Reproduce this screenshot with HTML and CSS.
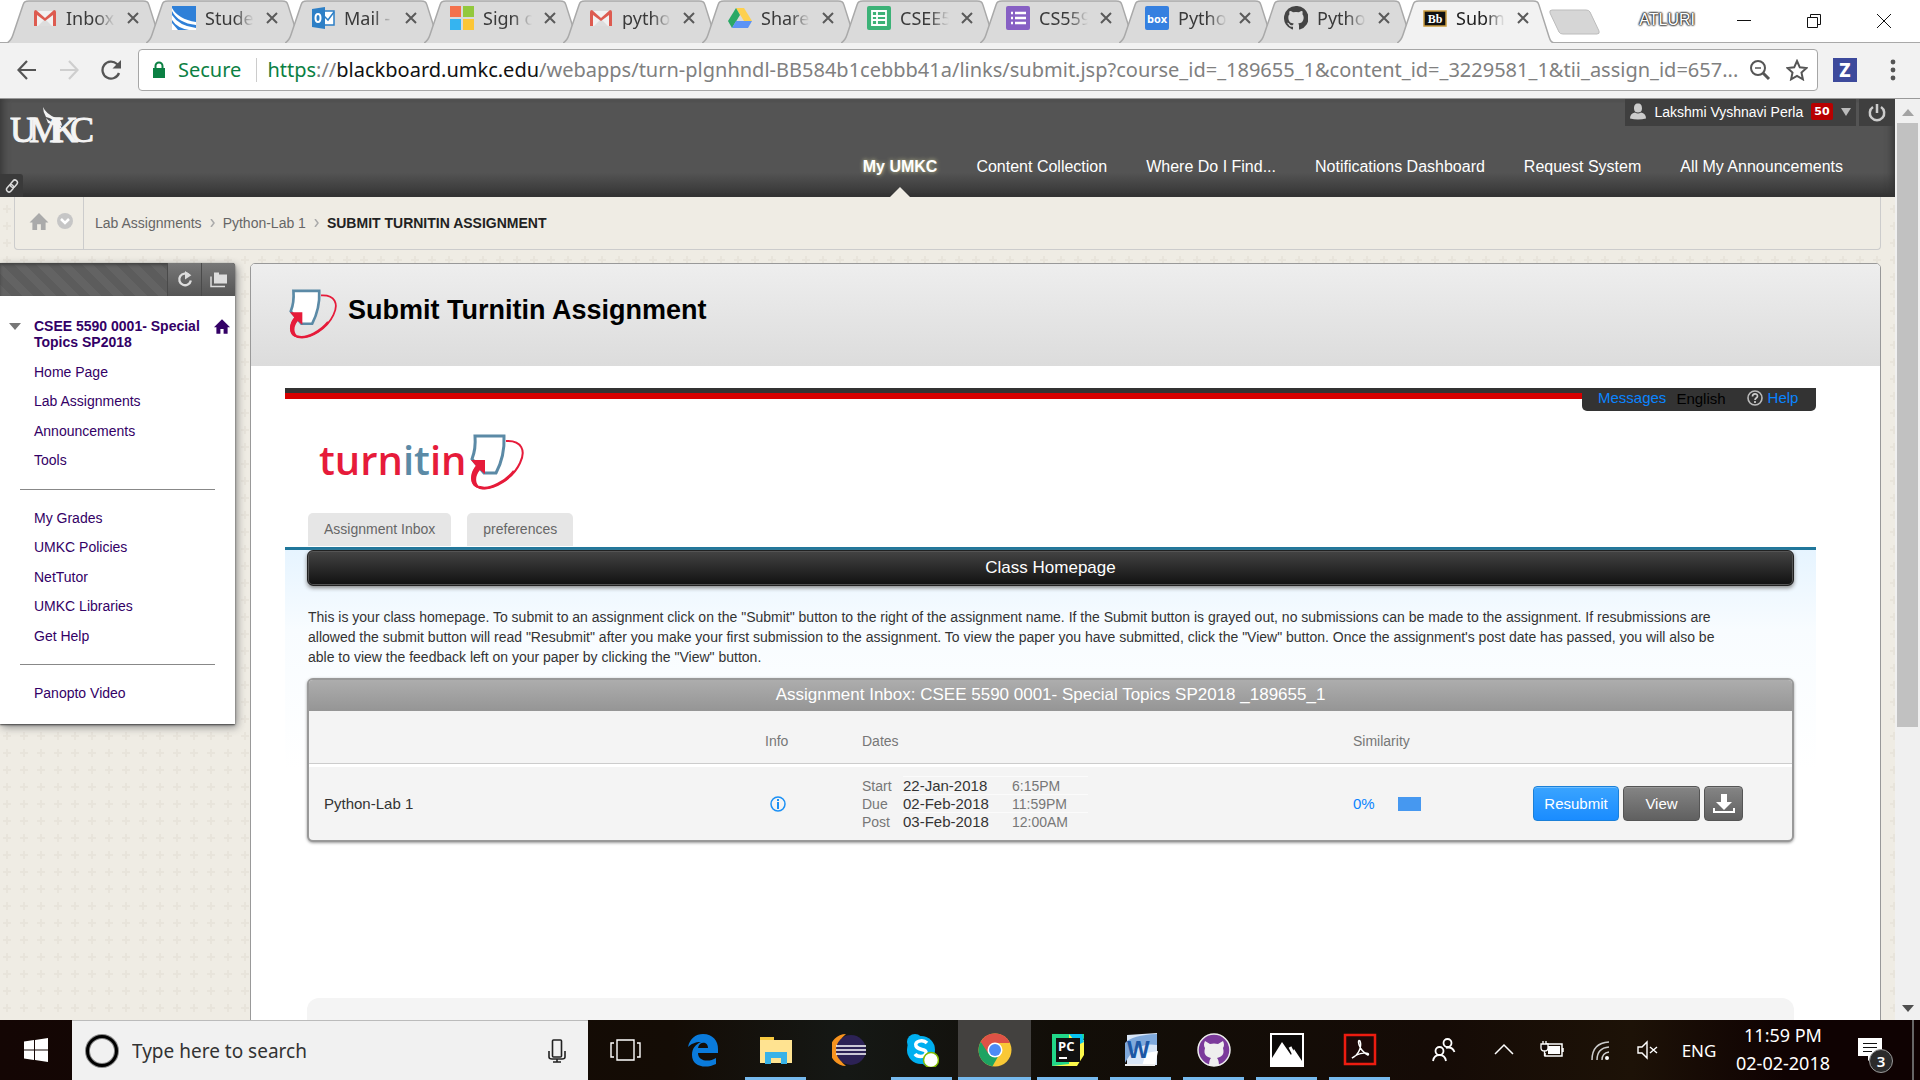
FILE: index.html
```html
<!DOCTYPE html>
<html lang="en">
<head>
<meta charset="utf-8">
<title>Submit Turnitin Assignment</title>
<link rel="stylesheet" href="styles.css">
</head>
<body>
<svg class="defs" aria-hidden="true">
  <symbol id="shape" viewBox="0 0 158 42" preserveAspectRatio="none"><path d="M0 42C4 40 5 37 6 34L16 5C17 2 18 1 22 1H136C140 1 141 2 142 5L152 36C153 39 154 42 158 42" stroke="#a9a9a9" stroke-width="1.5"/></symbol>
  <symbol id="x" viewBox="0 0 12 12"><path d="M1 1L11 11M11 1L1 11" stroke="#5a5a5a" stroke-width="2"/></symbol>
  <symbol id="gmail" viewBox="0 0 24 24"><path d="M2 5h20v15H2z" fill="#f1f1f1"/><path d="M5 20l7-7 7 7z" fill="#ddd"/><path d="M1 6q0-2 2-2l9 8 9-8q2 0 2 2v14h-3V9l-8 6-8-6v11H1z" fill="#dd5b50"/></symbol>
  <symbol id="cat" viewBox="0 0 16 16"><path d="M8 0a8 8 0 0 0-2.5 15.6c.4.1.5-.2.5-.4v-1.4c-2.2.5-2.700-.9-2.700-.9-.4-.9-.9-1.200-.9-1.200-.7-.5.1-.5.1-.5.8.1 1.200.8 1.200.8.7 1.200 1.900.9 2.300.7.1-.5.3-.9.5-1.100-1.800-.2-3.600-.9-3.600-4 0-.9.3-1.600.8-2.100-.1-.2-.4-1 .1-2.100 0 0 .7-.2 2.200.8a7.700 7.700 0 0 1 4 0c1.500-1 2.200-.8 2.200-.8.4 1.100.1 1.900.1 2.100.5.6.8 1.300.8 2.100 0 3.100-1.900 3.800-3.700 4 .3.2.6.7.6 1.500v2.200c0 .2.1.5.5.4A8 8 0 0 0 8 0z"/></symbol>
  <symbol id="tii" viewBox="0 0 54 56"><path d="M5 2H34Q35 22 26 39H14L2 25Q6 15 5 2z" fill="#fff" stroke="#5b8aa6" stroke-width="3"/><path d="M36 7C52 6 56 17 50 29C43 44 24 57 10 54C0 51 0 40 7 32" fill="none" stroke="#e61b3a" stroke-width="2"/><path d="M13 54C0 56-2 43 6 32L1 26H15V40L10 36C4 43 5 52 13 54z" fill="#e61b3a"/><path d="M9 53C20 57 37 46 44 37" stroke="#e61b3a" stroke-width="2.500" fill="none"/></symbol>
  <symbol id="home" viewBox="0 0 20 18"><path d="M10 0L20 10H17V18H12V12H8V18H3V10H0z"/></symbol>
</svg>

<header class="browser">
  <div class="strip">
    <nav class="tabs" aria-label="Tabs">
      <div class="tab"><svg class="shape"><use href="#shape"/></svg><svg class="fav"><use href="#gmail"/></svg><span class="name">Inbox</span><button aria-label="Close"><svg><use href="#x"/></svg></button></div>
      <div class="tab"><svg class="shape"><use href="#shape"/></svg><svg class="fav" viewBox="0 0 24 24"><path d="M0 0h24v24H0z" fill="#2f80d8"/><path d="M0 2Q6 13 24 16V19Q6 17 0 5zM0 9Q7 20 24 22V24H17Q5 22 0 14zM0 17L6 24H0z" fill="#fff"/></svg><span class="name">Stude</span><button aria-label="Close"><svg><use href="#x"/></svg></button></div>
      <div class="tab"><svg class="shape"><use href="#shape"/></svg><svg class="fav" viewBox="0 0 24 24"><path d="M9 5h14v14H9z" fill="#fff" stroke="#2d7fc6" stroke-width="1.500"/><path d="M13 10l4 4 6-8" fill="none" stroke="#2d7fc6" stroke-width="1.500"/><path d="M1 3l13-2v22L1 21z" fill="#2d7fc6"/><ellipse cx="7" cy="12" rx="2.500" ry="4" fill="none" stroke="#fff" stroke-width="2"/></svg><span class="name">Mail -</span><button aria-label="Close"><svg><use href="#x"/></svg></button></div>
      <div class="tab"><svg class="shape"><use href="#shape"/></svg><svg class="fav" viewBox="0 0 24 24"><path d="M0 0h11v11H0z" fill="#f4714b"/><path d="M13 0h11v11H13z" fill="#93c83d"/><path d="M0 13h11v11H0z" fill="#35b4f0"/><path d="M13 13h11v11H13z" fill="#fcc636"/></svg><span class="name">Sign o</span><button aria-label="Close"><svg><use href="#x"/></svg></button></div>
      <div class="tab"><svg class="shape"><use href="#shape"/></svg><svg class="fav"><use href="#gmail"/></svg><span class="name">pytho</span><button aria-label="Close"><svg><use href="#x"/></svg></button></div>
      <div class="tab"><svg class="shape"><use href="#shape"/></svg><svg class="fav" viewBox="0 0 24 24"><path d="M8 2h8l8 13h-8z" fill="#fdd04f"/><path d="M8 2l4 7L4 22 0 15z" fill="#2aa866"/><path d="M8 15h16l-4 7H4z" fill="#5c93f5"/></svg><span class="name">Share</span><button aria-label="Close"><svg><use href="#x"/></svg></button></div>
      <div class="tab"><svg class="shape"><use href="#shape"/></svg><svg class="fav" viewBox="0 0 24 24"><rect width="24" height="24" rx="2" fill="#3cb277"/><path d="M5 5h14v14H5zM5 10h14M5 14h14M10 5v14" fill="none" stroke="#fff" stroke-width="1.800"/></svg><span class="name">CSEE5</span><button aria-label="Close"><svg><use href="#x"/></svg></button></div>
      <div class="tab"><svg class="shape"><use href="#shape"/></svg><svg class="fav" viewBox="0 0 24 24"><rect width="24" height="24" rx="2" fill="#8760c4"/><path d="M5 7h2M9 7h11M5 12h2M9 12h11M5 17h2M9 17h11" stroke="#fff" stroke-width="2.500"/></svg><span class="name">CS559</span><button aria-label="Close"><svg><use href="#x"/></svg></button></div>
      <div class="tab"><svg class="shape"><use href="#shape"/></svg><svg class="fav" viewBox="0 0 24 24"><rect width="24" height="24" rx="2" fill="#3580e0"/><text x="12" y="17" text-anchor="middle" class="box-word">box</text></svg><span class="name">Pytho</span><button aria-label="Close"><svg><use href="#x"/></svg></button></div>
      <div class="tab"><svg class="shape"><use href="#shape"/></svg><svg class="fav octo"><use href="#cat"/></svg><span class="name">Pytho</span><button aria-label="Close"><svg><use href="#x"/></svg></button></div>
      <div class="tab active"><svg class="shape"><use href="#shape"/></svg><svg class="fav" viewBox="0 0 24 24"><path d="M1 5h22v15H1z" fill="#111" stroke="#c99a3c" stroke-width="1.500"/><text x="12" y="17" text-anchor="middle" class="bb-word">Bb</text></svg><span class="name">Subm</span><button aria-label="Close"><svg><use href="#x"/></svg></button></div>
    </nav>
    <button class="newtab" aria-label="New tab"><svg viewBox="0 0 52 26"><path d="M3 1H37Q40 1 41 3L50 22Q51 25 48 25H14Q11 25 10 23L1 4Q0 1 3 1z" fill="#d6d6d6" stroke="#bcbcbc"/></svg></button>
    <div class="window">
      <span class="profile">ATLURI</span>
      <button aria-label="Minimize"><svg viewBox="0 0 16 16"><path d="M1 7.500h14" stroke="#111"/></svg></button>
      <button aria-label="Restore"><svg viewBox="0 0 16 16"><path d="M1.500 4.500h10v10h-10zM4.500 4V1.500h10v10H12" fill="none" stroke="#111"/></svg></button>
      <button aria-label="Close window"><svg viewBox="0 0 16 16"><path d="M1 1l14 14M15 1L1 15" stroke="#111"/></svg></button>
    </div>
  </div>
  <div class="toolbar">
    <button aria-label="Back"><svg viewBox="0 0 20 20"><path d="M19 10H2M10 1L1.500 10 10 19" fill="none" stroke="#555" stroke-width="2.200"/></svg></button>
    <button aria-label="Forward"><svg viewBox="0 0 20 20"><path d="M1 10h17M10 1l8.500 9L10 19" fill="none" stroke="#cfcfcf" stroke-width="2.200"/></svg></button>
    <button aria-label="Reload"><svg viewBox="0 0 20 20"><path d="M18 13A8.500 8.500 0 1 1 16 4l2 2" fill="none" stroke="#555" stroke-width="2.300"/><path d="M20 0v8.500h-8.500z" fill="#555"/></svg></button>
    <div class="omnibox">
      <svg class="lock" viewBox="0 0 14 18"><path d="M1 7h12v10H1z" fill="#0b8043"/><path d="M3.500 7V5a3.500 3.500 0 0 1 7 0v2" fill="none" stroke="#0b8043" stroke-width="2"/></svg>
      <span class="secure">Secure</span>
      <div class="url" role="textbox" aria-label="Address"><span class="scheme">https</span>://<b>blackboard.umkc.edu</b>/webapps/turn-plgnhndl-BB584b1cebbb41a/links/submit.jsp?course_id=_189655_1&amp;content_id=_3229581_1&amp;tii_assign_id=657...</div>
      <button aria-label="Zoom"><svg viewBox="0 0 22 22"><circle cx="9" cy="9" r="7" fill="none" stroke="#555" stroke-width="2"/><path d="M6 9h6" stroke="#555" stroke-width="1.500"/><path d="M14 14l6 6" stroke="#555" stroke-width="3"/></svg></button>
      <button class="star" aria-label="Bookmark"><svg viewBox="0 0 22 22"><path d="M11 2l2.800 6.300 6.700.7-5 4.600 1.400 6.700L11 16.900l-5.900 3.400 1.400-6.700-5-4.600 6.700-.7z" fill="none" stroke="#555" stroke-width="2"/></svg></button>
    </div>
    <button class="ext" aria-label="Extension">Z</button>
    <button class="menu" aria-label="Menu"><svg viewBox="0 0 6 22"><g fill="#555"><circle cx="3" cy="3" r="2.400"/><circle cx="3" cy="11" r="2.400"/><circle cx="3" cy="19" r="2.400"/></g></svg></button>
  </div>
</header>

<div class="view">
  <div class="page">
    <header class="top">
      <svg class="umkc" viewBox="0 0 86 38" role="img" aria-label="UMKC"><text x="0 19 42 60" y="35">UMKC</text><path d="M33 0Q36 7 46 11Q52 13 52 19Q42 11 36 10Q33 5 33 0zM36 11Q40 16 50 17L52 22Q42 17 38 16z"/></svg>
      <div class="account">
        <button class="user"><svg class="person" viewBox="0 0 16 16"><path d="M8 0C11 0 12 2 12 5S10 9 8 9 4 8 4 5 5 0 8 0zM0 15Q0 10 5 9Q8 11 11 9Q16 10 16 15Q8 17 0 15z" fill="#ccc"/></svg><span>Lakshmi Vyshnavi Perla</span><span class="count">50</span><svg class="caret" viewBox="0 0 10 8"><path d="M0 0h10L5 8z" fill="#bbb"/></svg></button>
        <button class="power" aria-label="Logout"><svg viewBox="0 0 18 18"><path d="M5 3A7.200 7.200 0 1 0 13 3M9 0v9" fill="none" stroke="#ccc" stroke-width="2.500"/></svg></button>
      </div>
      <nav class="mainnav"><a class="on" href="#">My UMKC</a><a href="#">Content Collection</a><a href="#">Where Do I Find...</a><a href="#">Notifications Dashboard</a><a href="#">Request System</a><a href="#">All My Announcements</a></nav>
      <button class="quick" aria-label="Quick links"><svg viewBox="0 0 14 14"><g fill="none" stroke="#ddd" stroke-width="1.500" transform="rotate(-50 7 7)"><rect x="0" y="4.500" width="8" height="5" rx="2.500"/><rect x="6" y="4.500" width="8" height="5" rx="2.500"/></g></svg></button>
    </header>
    <nav class="crumbs" aria-label="Breadcrumb">
      <div class="crumb-home"><a href="#" aria-label="Home"><svg class="h"><use href="#home"/></svg></a><button aria-label="More"><svg viewBox="0 0 16 16"><circle cx="8" cy="8" r="8" fill="#c6c6c6"/><path d="M4 6l4 4 4-4" fill="none" stroke="#fff" stroke-width="2.500"/></svg></button></div>
      <div class="trail"><a href="#">Lab Assignments</a><svg viewBox="0 0 5 8"><path d="M1 0l3 4-3 4" fill="none" stroke="#aaa" stroke-width="1.500"/></svg><a href="#">Python-Lab 1</a><svg viewBox="0 0 5 8"><path d="M1 0l3 4-3 4" fill="none" stroke="#aaa" stroke-width="1.500"/></svg><strong>SUBMIT TURNITIN ASSIGNMENT</strong></div>
    </nav>
    <div class="columns">
      <aside class="side">
        <div class="side-bar"><button aria-label="Refresh"><svg viewBox="0 0 16 16"><path d="M12 4A5.500 5.500 0 1 0 13.500 9" fill="none" stroke="#ddd" stroke-width="2.200"/><path d="M8 0l6 4-6 4z" fill="#ddd"/></svg></button><button aria-label="Folder view"><svg viewBox="0 0 18 16"><path d="M4 3V1h5v2h8v9H4z" fill="#ddd"/><path d="M1 5v10h14" fill="none" stroke="#ddd" stroke-width="1.500"/></svg></button></div>
        <div class="course"><svg class="tri" viewBox="0 0 12 8"><path d="M0 0h12L6 7z" fill="#777"/></svg><a href="#">CSEE 5590 0001- Special Topics SP2018</a><svg class="h"><use href="#home"/></svg></div>
        <ul><li><a href="#">Home Page</a></li><li><a href="#">Lab Assignments</a></li><li><a href="#">Announcements</a></li><li><a href="#">Tools</a></li></ul>
        <hr>
        <ul><li><a href="#">My Grades</a></li><li><a href="#">UMKC Policies</a></li><li><a href="#">NetTutor</a></li><li><a href="#">UMKC Libraries</a></li><li><a href="#">Get Help</a></li></ul>
        <hr>
        <ul><li><a href="#">Panopto Video</a></li></ul>
      </aside>
      <main class="main">
        <div class="title"><svg><use href="#tii"/></svg><h1>Submit Turnitin Assignment</h1></div>
        <section class="frame">
          <div class="stripe"><div class="links"><a href="#">Messages</a><span>English</span><svg viewBox="0 0 16 16"><circle cx="8" cy="8" r="7" fill="none" stroke="#bbb" stroke-width="1.600"/><path d="M5.500 6.500C5.500 3 10.500 3 10.500 6.200C10.500 8 8 8 8 10M8 11v2" fill="none" stroke="#ccc" stroke-width="1.700"/></svg><a href="#">Help</a></div></div>
          <div class="brand"><span class="word">turn<i>it</i>in</span><svg><use href="#tii"/></svg></div>
          <nav class="subtabs"><a href="#">Assignment Inbox</a><a href="#">preferences</a></nav>
          <div class="body">
            <h2>Class Homepage</h2>
            <p>This is your class homepage. To submit to an assignment click on the "Submit" button to the right of the assignment name. If the Submit button is grayed out, no submissions can be made to the assignment. If resubmissions are<br>allowed the submit button will read "Resubmit" after you make your first submission to the assignment. To view the paper you have submitted, click the "View" button. Once the assignment's post date has passed, you will also be<br>able to view the feedback left on your paper by clicking the "View" button.</p>
            <div class="inbox">
              <table>
                <caption>Assignment Inbox: CSEE 5590 0001- Special Topics SP2018 _189655_1</caption>
                <colgroup><col><col class="c2"><col class="c3"><col class="c4"><col class="c5"></colgroup>
                <thead><tr><th></th><th>Info</th><th>Dates</th><th>Similarity</th><th></th></tr></thead>
                <tbody><tr>
                  <td class="paper">Python-Lab 1</td>
                  <td><svg class="info" viewBox="0 0 16 16"><circle cx="8" cy="8" r="7" fill="none" stroke="#1b90f5" stroke-width="1.500"/><path d="M8 3v2M8 6v7" stroke="#1b90f5" stroke-width="2"/></svg></td>
                  <td><div class="dates"><span>Start</span><b>22-Jan-2018</b><i>6:15PM</i><span>Due</span><b>02-Feb-2018</b><i>11:59PM</i><span>Post</span><b>03-Feb-2018</b><i>12:00AM</i></div></td>
                  <td><div class="sim"><a href="#">0%</a><span class="swatch"></span></div></td>
                  <td><div class="acts"><button class="blue">Resubmit</button><button>View</button><button class="dl" aria-label="Download"><svg viewBox="0 0 22 20"><path d="M8 0h6v8h5l-8 8-8-8h5z" fill="#fff"/><path d="M1 14v4h20v-4" fill="none" stroke="#fff" stroke-width="2"/></svg></button></div></td>
                </tr></tbody>
              </table>
            </div>
            <div class="foot"></div>
          </div>
        </section>
      </main>
    </div>
  </div>
  <div class="scroll"><svg viewBox="0 0 12 7"><path d="M0 7h12L6 0z" fill="#a3a3a3"/></svg><div class="track"><div class="thumb"></div></div><svg viewBox="0 0 12 7"><path d="M0 0h12L6 7z" fill="#505050"/></svg></div>
</div>

<footer class="taskbar">
  <button class="start" aria-label="Start"><svg viewBox="0 0 24 24"><path d="M0 3.500L10 2v9.500H0zM11 2L24 0v11.500H11zM0 12.500h10V22L0 20.500zM11 12.500h13V24L11 22z" fill="#fff"/></svg></button>
  <label class="search"><svg class="ring" viewBox="0 0 34 34"><circle cx="17" cy="17" r="14.500" fill="none" stroke="#888" stroke-width="5"/><circle cx="17" cy="17" r="14.500" fill="none" stroke="#000" stroke-width="3"/></svg><input type="text" placeholder="Type here to search" aria-label="Search"><svg class="mic" viewBox="0 0 18 24"><g fill="none" stroke="#222" stroke-width="1.600"><rect x="4.500" y="1" width="9" height="17" rx="1"/><path d="M1 12v6q0 2 3 2h10q3 0 3-2v-6M9 20v3M5 23h8"/></g></svg></label>
  <button class="app view-app" aria-label="Task view"><svg viewBox="0 0 34 34"><path d="M9 7h17v20H9zM6 10H3v14h3M29 10h3v14h-3" fill="none" stroke="#fff" stroke-width="1.400"/></svg></button>
  <button class="app" aria-label="Edge"><svg viewBox="0 0 34 34"><path d="M2 14C4 5 10 1 17 1C27 1 32 8 32 16V20H12C12 29 24 29 30 25V31C20 36 6 34 6 22C6 15 10 11 15 9C9 9 5 11 2 14zM12 15H22C22 8 13 8 12 15z" fill="#0a7bdc"/></svg></button>
  <button class="app run" aria-label="File Explorer"><svg viewBox="0 0 34 34"><path d="M1 4h14v4H1z" fill="#f7c940"/><path d="M1 7h32v23H1z" fill="#ffe391"/><path d="M6 31V19h22v12h-6v-6H12v6z" fill="#38b2e8"/></svg></button>
  <button class="app" aria-label="Eclipse"><svg viewBox="0 0 34 34"><path d="M14 1A16 16 0 0 0 14 33A20 20 0 0 1 14 1z" fill="#f7931e"/><circle cx="19" cy="17" r="15" fill="#2c2255"/><path d="M4 13h30M4 17h30M4 21h30" stroke="#fff" stroke-width="1.700"/></svg></button>
  <button class="app run" aria-label="Skype"><svg viewBox="0 0 34 34"><circle cx="16" cy="17" r="14" fill="#00aff0"/><circle cx="10" cy="9" r="8" fill="#00aff0"/><circle cx="23" cy="25" r="8" fill="#00aff0"/><path d="M22 10C18 6 9 8 11 13C13 18 22 15 21 20C20 25 12 24 10 21" fill="none" stroke="#fff" stroke-width="3.500"/><circle cx="26" cy="27" r="7.500" fill="#fff" stroke="#7fba00" stroke-width="1.500"/></svg></button>
  <button class="app run current" aria-label="Chrome"><svg viewBox="0 0 34 34"><circle cx="17" cy="17" r="16.500" fill="#f9c836"/><path d="M17 17L2.700 8.800A16.500 16.500 0 0 0 14.500 33.300L22 20z" fill="#1da362"/><path d="M2.700 8.800A16.500 16.500 0 0 1 32 10H17L10 20z" fill="#de5246"/><circle cx="17" cy="17" r="7.500" fill="#fff"/><circle cx="17" cy="17" r="6" fill="#4c8bf5"/></svg></button>
  <button class="app run" aria-label="PyCharm"><svg viewBox="0 0 34 34"><path d="M1 1h20v32H1z" fill="#21d789"/><path d="M18 1l15 6v15L26 33H1l5-6z" fill="#fcf84a"/><path d="M1 1h17v30L1 33zM20 1h13v5z" fill="#21d789"/><path d="M18 1h13l2 8-6 3z" fill="#07c3f2"/><path d="M5 5h24v24H5z" fill="#111"/><text x="7" y="18" class="pc">PC</text><path d="M8 25h8" stroke="#fff" stroke-width="2"/></svg></button>
  <button class="app run" aria-label="Word"><svg viewBox="0 0 34 34"><path d="M3 2L33 0V32H3z" fill="#d9e6f7"/><path d="M1 10Q8 2 33 1V12Q12 8 1 30z" fill="#7fa9dc"/><path d="M22 20l12-2-3 15H18z" fill="#fff"/><text x="3" y="25" class="w">W</text><path d="M1 32h30" stroke="#eee" stroke-width="2"/></svg></button>
  <button class="app run" aria-label="GitHub Desktop"><svg viewBox="0 0 34 34"><circle cx="17" cy="17" r="16" fill="#7b3a9b" stroke="#eee" stroke-width="1.500"/><path d="M8 8l5 3q4-1 8 0l5-3q2 4 0 7c2 7-2 9-6 10q2 2 2 8H12q0-6 2-8c-4-1-8-3-6-10q-2-3 0-7z" fill="#eee"/></svg></button>
  <button class="app run" aria-label="Photos"><svg viewBox="0 0 34 34"><path d="M1 1h32v32H1z" fill="#0b0908" stroke="#fff" stroke-width="2"/><path d="M2 25L12 9l9 13 3-6 8 12v4H2z" fill="#fff"/><path d="M20 14l4 8" stroke="#fff" stroke-width="3"/></svg></button>
  <button class="app run" aria-label="Acrobat"><svg viewBox="0 0 34 34"><path d="M2 2h30v29H2z" fill="#1c0908" stroke="#ed1c10" stroke-width="2.500"/><path d="M9 25C16 22 19 13 17 8C14 5 15 17 25 22C28 19 16 19 9 25z" fill="none" stroke="#fff" stroke-width="1.500"/></svg></button>
  <div class="tray">
    <button class="people" aria-label="People"><svg viewBox="0 0 24 24"><g fill="none" stroke="#fff" stroke-width="1.800"><circle cx="15.500" cy="5" r="4"/><circle cx="7.500" cy="13" r="4"/><path d="M1 23q1-6 6.500-6t6.500 6M14 10q6-2 8.500 4"/></g></svg></button>
    <button class="chev" aria-label="Hidden icons"><svg viewBox="0 0 24 24"><path d="M3 16l9-9 9 9" fill="none" stroke="#fff" stroke-width="1.500"/></svg></button>
    <button class="bat" aria-label="Battery"><svg viewBox="0 0 24 24"><path d="M6 6h16v12H5v-3M23 10v4" fill="none" stroke="#fff" stroke-width="1.500"/><path d="M8 8h12v8H8z" fill="#fff"/><path d="M1 6h7v4q0 3-3.500 3T1 10zM3 3v3M6 3v3M4.500 13v5" fill="#120806" stroke="#fff" stroke-width="1.300"/></svg></button>
    <button class="wifi" aria-label="Network"><svg viewBox="0 0 24 24"><path d="M4 22Q4 5 21 4M9 22Q9 10 21 9M14 22Q14 15 21 14" fill="none" stroke="#ccc" stroke-width="1.500"/><circle cx="19" cy="20" r="2" fill="#fff"/></svg></button>
    <button class="vol" aria-label="Volume"><svg viewBox="0 0 24 24"><path d="M2 9h4l5-5v16l-5-5H2zM14 9l7 6M21 9l-7 6" fill="none" stroke="#fff" stroke-width="1.400"/></svg></button>
    <button class="lang">ENG</button>
    <button class="clock"><span>11:59 PM</span><span>02-02-2018</span></button>
    <button class="note" aria-label="Notifications"><svg viewBox="0 0 24 24"><path d="M0 0h24v18H15l-5 5v-5H0z" fill="#fff"/><path d="M5 5.500h14M5 9.500h14M5 13.500h9" stroke="#111" stroke-width="1.200"/></svg><span class="badge">3</span></button>
    <span class="peek"></span>
  </div>
</footer>
</body>
</html>
```
FILE: styles.css
```css
* { box-sizing: border-box; }
body { margin: 0; height: 100vh; display: flex; flex-direction: column; overflow: hidden; font-family: "Liberation Sans", Arial, sans-serif; font-size: 14px; color: #333; }
button { border: 0; padding: 0; margin: 0; background: none; font: inherit; color: inherit; display: flex; align-items: center; justify-content: center; flex: none; }
a { text-decoration: none; color: inherit; }
svg { flex: none; display: block; }
.defs { position: absolute; width: 0; height: 0; }

/* browser chrome */
.browser, .taskbar { font-family: "Noto Sans", "Open Sans", sans-serif; flex: none; }
.strip { display: flex; height: 43px; background: linear-gradient(#a9a9a9, #a9a9a9) bottom / 100% 1px no-repeat #fff; }
.tabs { display: flex; padding-left: 7px; height: 43px; }
.tab { position: relative; width: 158px; margin-right: -19px; display: flex; align-items: center; padding: 0 26px 8px 26px; gap: 9px; color: #3a3a3a; font-size: 18px; }
.shape { position: absolute; left: 0; top: 0; width: 158px; height: 43px; fill: #dadada; }
.tab .fav, .tab .name, .tab button { position: relative; }
.active { z-index: 1; color: #222; }
.active .shape { fill: #f2f2f2; }
.fav { width: 24px; height: 24px; }
.octo { fill: #444; }
.name { flex: 1; min-width: 0; overflow: hidden; white-space: nowrap; line-height: 30px; -webkit-mask-image: linear-gradient(90deg, #000 60%, transparent); mask-image: linear-gradient(90deg, #000 60%, transparent); }
.tab button svg { width: 12px; height: 12px; }
.tab button { margin-left: 3px; }
.box-word { font: bold 11px "Open Sans", sans-serif; fill: #fff; }
.bb-word { font: bold 12px "Liberation Serif", serif; fill: #fff; }
.newtab { margin-left: 13px; width: 52px; height: 43px; }
.newtab svg { width: 52px; height: 26px; }
.window { margin-left: auto; display: flex; align-items: center; padding-right: 1px; }
.window button { width: 70px; height: 42px; padding-bottom: 2px; }
.window svg { width: 16px; height: 16px; }
.profile { font: 16px/20px "Liberation Sans", sans-serif; color: #fff; margin-right: 14px; padding-bottom: 4px; text-shadow: 0 0 2px #222, 0 0 2px #222, 0 0 2px #222, 0 0 2px #222; }
.toolbar { display: flex; align-items: center; height: 56px; padding: 0 20px 2px 16px; background: #f2f2f2; border-bottom: 1px solid #999; }
.toolbar > button { width: 22px; margin-right: 20px; }
.toolbar > button svg { width: 20px; height: 20px; }
.omnibox { flex: 1; min-width: 0; display: flex; align-items: center; height: 42px; border: 1px solid #a6a6a6; border-radius: 4px; background: #fff; padding: 0 9px 0 13px; font-size: 20px; color: #808080; margin: 0 15px 0 -4px; }
.lock { width: 14px; height: 18px; margin-right: 12px; }
.secure { color: #0b8043; padding-right: 15px; border-right: 1px solid #ccc; line-height: 24px; margin-right: 10px; }
.url { flex: 1; min-width: 0; overflow: hidden; white-space: nowrap; }
.url b { font-weight: 400; color: #111; }
.scheme { color: #0b8043; }
.omnibox button { margin-left: 6px; }
.omnibox .star { margin-left: 15px; }
.omnibox button svg { width: 22px; height: 22px; }
.toolbar .ext { width: 24px; height: 24px; background: #3d4a9c; color: #fff; font-weight: 800; font-size: 19px; line-height: 24px; margin-right: 33px; }
.toolbar .menu { width: 6px; margin-right: 4px; }
.toolbar .menu svg { width: 6px; height: 22px; }

/* page */
.view { flex: 1; min-height: 0; display: flex; overflow: hidden; }
.page { flex: 1; min-width: 0; overflow: hidden; background: url("data:image/svg+xml,%3Csvg xmlns='http://www.w3.org/2000/svg' width='17' height='17'%3E%3Cpath d='M3 8h8M7 4v8' stroke='%23e8e4db' stroke-width='2'/%3E%3C/svg%3E") #efece4; }
.top { position: relative; display: flex; flex-direction: column; height: 98px; background: linear-gradient(#545454 75%, #333); box-shadow: inset 8px 0 8px -6px #333, inset -8px 0 8px -6px #333; color: #fff; }
.umkc { position: absolute; left: 10px; top: 8px; width: 86px; height: 38px; fill: #f4f4f4; }
.umkc text { font: 36px "Liberation Serif", serif; stroke: #f4f4f4; stroke-width: 1px; }
.account { display: flex; gap: 3px; align-self: flex-end; height: 27px; }
.account button { background: #3f3f3f; }
.user { width: 231px; padding-bottom: 2px; gap: 8px; }
.person { width: 16px; height: 17px; }
.count { background: #b80000; border-radius: 2px; font: bold 11px/17px "DejaVu Sans", sans-serif; padding: 0 3px; }
.caret { width: 10px; height: 8px; }
.power { width: 36px; }
.power svg { width: 18px; height: 18px; }
.mainnav { display: flex; justify-content: flex-end; gap: 39px; padding: 30px 52px 0 0; font-size: 16px; line-height: 22px; height: 71px; }
.on { position: relative; font-weight: 700; text-shadow: 0 0 4px #cc9; }
.on::after { content: ""; position: absolute; left: 50%; bottom: -3px; margin-left: -13px; border: 13px solid transparent; border-top: 0; border-bottom-color: #efece4; }
.quick { position: absolute; left: 0; bottom: 0; width: 23px; height: 23px; background: #3a3a3a; border-radius: 0 3px 0 0; }
.quick svg { width: 14px; height: 14px; }
.crumbs { display: flex; margin: 0 14px; height: 53px; border: 1px solid #ccc; border-top: 0; border-radius: 0 0 4px 4px; background: #efece4; color: #666; }
.crumb-home { display: flex; align-items: center; gap: 8px; width: 69px; padding: 0 0 4px 14px; border-right: 1px solid #ccc; }
.crumb-home .h { width: 20px; height: 17px; fill: #aaa; }
.crumb-home button svg { width: 16px; height: 16px; }
.trail { display: flex; align-items: center; gap: 8px; padding: 0 0 0 11px; }
.trail svg { width: 5px; height: 8px; }
.trail strong { color: #222; }
.columns { display: flex; align-items: flex-start; gap: 15px; padding: 13px 14px 0 0; }
.side { width: 235px; flex: none; background: #fff; padding-bottom: 17px; border-radius: 0 3px 0 0; box-shadow: 0 1px 2px #444, 2px 3px 8px #888; color: #306; }
.side-bar { display: flex; justify-content: flex-end; height: 33px; background: repeating-linear-gradient(45deg, #636363 0 8px, #5c5c5c 8px 16px); border-radius: 0 3px 0 0; overflow: hidden; box-shadow: inset 0 2px 3px #444; }
.side-bar button { width: 34px; border-left: 1px solid #4a4a4a; background: linear-gradient(#777, #555); }
.side-bar svg { width: 18px; height: 17px; }
.course { display: flex; padding: 22px 5px 7px 9px; font-weight: 700; line-height: 16px; }
.course a { flex: 1; }
.tri { width: 12px; height: 8px; margin: 5px 13px 0 0; }
.course .h { width: 16px; height: 15px; fill: #306; margin-top: 1px; }
.side ul { list-style: none; margin: 0; padding: 0 0 0 34px; }
.side li { height: 29px; line-height: 28px; padding-top: 1px; }
.side li:nth-child(even) { height: 30px; }
.side hr { height: 1px; border: 0; background: #888; margin: 14px 20px 13px 20px; }
.main { flex: 1; min-width: 0; background: #fff; border: 1px solid #999; border-radius: 5px 5px 0 0; min-height: 1000px; }
.title { display: flex; align-items: flex-start; gap: 11px; height: 102px; padding: 24px 0 0 38px; background: linear-gradient(#eee, #dcdcdc); border-radius: 4px 4px 0 0; color: #000; }
.title svg { width: 48px; height: 52px; }
h1 { font-size: 27px; line-height: 44px; margin: 0; font-weight: 700; }
.frame { margin: 22px 64px 0 34px; }
.stripe { display: flex; justify-content: flex-end; height: 38px; background: linear-gradient(#333 5px, #d60000 5px, #d60000 11px, transparent 11px); }
.links { display: flex; align-items: center; width: 234px; height: 23px; background: #333; border-radius: 0 0 5px 5px; padding: 0 16px 4px; color: #000; line-height: 18px; font-size: 15px; }
.links a { color: #0a84ff; }
.links span { margin: 2px 21px 0 10px; }
.links svg { width: 16px; height: 16px; margin-right: 5px; }
.brand { display: flex; align-items: flex-start; gap: 4px; height: 87px; padding: 8px 0 0 34px; }
.word { font: 600 40px/52px "Open Sans", sans-serif; color: #e61b3a; }
.word i { font-style: normal; color: #5b8aa6; }
.brand svg { width: 54px; height: 56px; }
.subtabs { display: flex; gap: 16px; padding: 0 0 1px 23px; }
.subtabs a { background: #e6e6e6; border-radius: 5px 5px 0 0; padding: 0 16px; line-height: 33px; height: 33px; color: #666; }
.body { border-top: 3px solid #20779b; background: linear-gradient(#e6f4ff, #f8fcff 80px, #fff 220px); padding: 0 22px; }
h2 { margin: 0; height: 36px; line-height: 34px; font-size: 17px; font-weight: 400; color: #fff; text-align: center; border: 1px solid #222; border-radius: 6px; background: linear-gradient(#444, #111); box-shadow: inset 0 0 0 1px #555, 0 2px 4px #888; }
.body p { margin: 21px 0 11px; line-height: 20px; padding-left: 1px; }
.inbox { border: 2px solid #999; border-radius: 6px; background: #f4f4f4; box-shadow: 0 1px 3px #999; overflow: hidden; }
table { width: 100%; table-layout: fixed; border-collapse: separate; border-spacing: 0; }
caption { height: 31px; line-height: 30px; color: #fff; font-size: 17px; background: linear-gradient(#adadad, #959595); }
.c2 { width: 97px; } .c3 { width: 491px; } .c4 { width: 180px; } .c5 { width: 259px; }
th { font-weight: 400; text-align: left; color: #777; height: 53px; padding: 8px 0 0; border-bottom: 1px solid #ccc; }
td { padding: 0; height: 76px; border-top: 3px solid #fff; }
td.paper { padding-left: 15px; font-size: 15px; }
.info { width: 16px; height: 16px; margin-left: 5px; }
.dates { display: grid; grid-template-columns: 41px 109px 76px; line-height: 18px; color: #777; }
.dates b { font-weight: 400; font-size: 15px; color: #333; }
.dates i { font-style: normal; }
.dates b, .dates i { box-shadow: 0 -1px #fbfbfb; }
.sim { display: flex; align-items: center; gap: 23px; font-size: 15px; color: #0a84ff; }
.swatch { width: 23px; height: 14px; background: #4698f0; }
.acts { display: flex; gap: 4px; }
.acts button { width: 77px; height: 35px; border: 1px solid #555; border-radius: 4px; background: linear-gradient(#858585, #606060); color: #fff; font-size: 15px; box-shadow: inset 0 1px #999; }
.acts .blue { width: 86px; border-color: #1b80d8; background: linear-gradient(#3aa4ff, #1a8cff); box-shadow: inset 0 1px #6dbdff; }
.acts .dl { width: 39px; }
.dl svg { width: 22px; height: 20px; }
.foot { margin-top: 156px; height: 120px; border-radius: 12px; background: #f4f4f4; }
.scroll { width: 25px; flex: none; display: flex; flex-direction: column; align-items: center; gap: 7px; padding: 10px 0 8px; background: #f0f0f0; }
.scroll svg { width: 12px; height: 7px; }
.track { flex: 1; width: 21px; }
.thumb { height: 69%; background: #c1c1c1; }

/* taskbar */
.taskbar { display: flex; height: 60px; background: linear-gradient(90deg, #140604, #140c05 35%, #151815 44%, #120e08 55%, #150b06 75%, #1d1207 85%, #0f0202 93%); color: #fff; }
.start { width: 72px; }
.start svg { width: 24px; height: 24px; }
.search { width: 516px; flex: none; display: flex; align-items: center; background: #f1f1f1; border-top: 1px solid #bbb; padding: 0 22px 0 13px; }
.ring { width: 34px; height: 34px; margin-right: 13px; }
.search input { flex: 1; min-width: 0; border: 0; padding: 0; outline: 0; background: none; font: inherit; font-size: 19px; color: #333; }
.search input::placeholder { color: #333; opacity: 1; }
.mic { width: 18px; height: 24px; }
.app { width: 73px; height: 60px; position: relative; }
.app svg { width: 34px; height: 34px; }
.view-app { margin-right: 5px; }
.run::after { content: ""; position: absolute; left: 6px; right: 6px; bottom: 0; height: 3px; background: #76b9ed; }
.current { background: #43413f; }
.current::after { left: 0; right: 0; }
.pc { font: bold 13px "Open Sans", sans-serif; fill: #fff; }
.w { font: bold 24px "Liberation Sans", sans-serif; fill: #1c57a5; }
.tray { display: flex; margin-left: auto; align-items: center; font-size: 18px; }
.tray svg { width: 24px; height: 24px; }
.people { width: 60px; padding-right: 12px; }
.chev, .bat, .wifi, .vol { width: 48px; }
.lang { width: 54px; font-size: 17px; }
.clock { width: 114px; flex-direction: column; line-height: 28px; padding-bottom: 2px; }
.note { position: relative; width: 72px; height: 60px; padding-left: 18px; justify-content: flex-start; }
.badge { position: absolute; left: 29px; top: 29px; width: 24px; height: 24px; border: 1px solid #999; border-radius: 50%; background: #2b2b2b; font-size: 15px; font-weight: 600; line-height: 22px; text-align: center; }
.peek { width: 2px; height: 60px; background: #666; margin-right: 6px; }
```
